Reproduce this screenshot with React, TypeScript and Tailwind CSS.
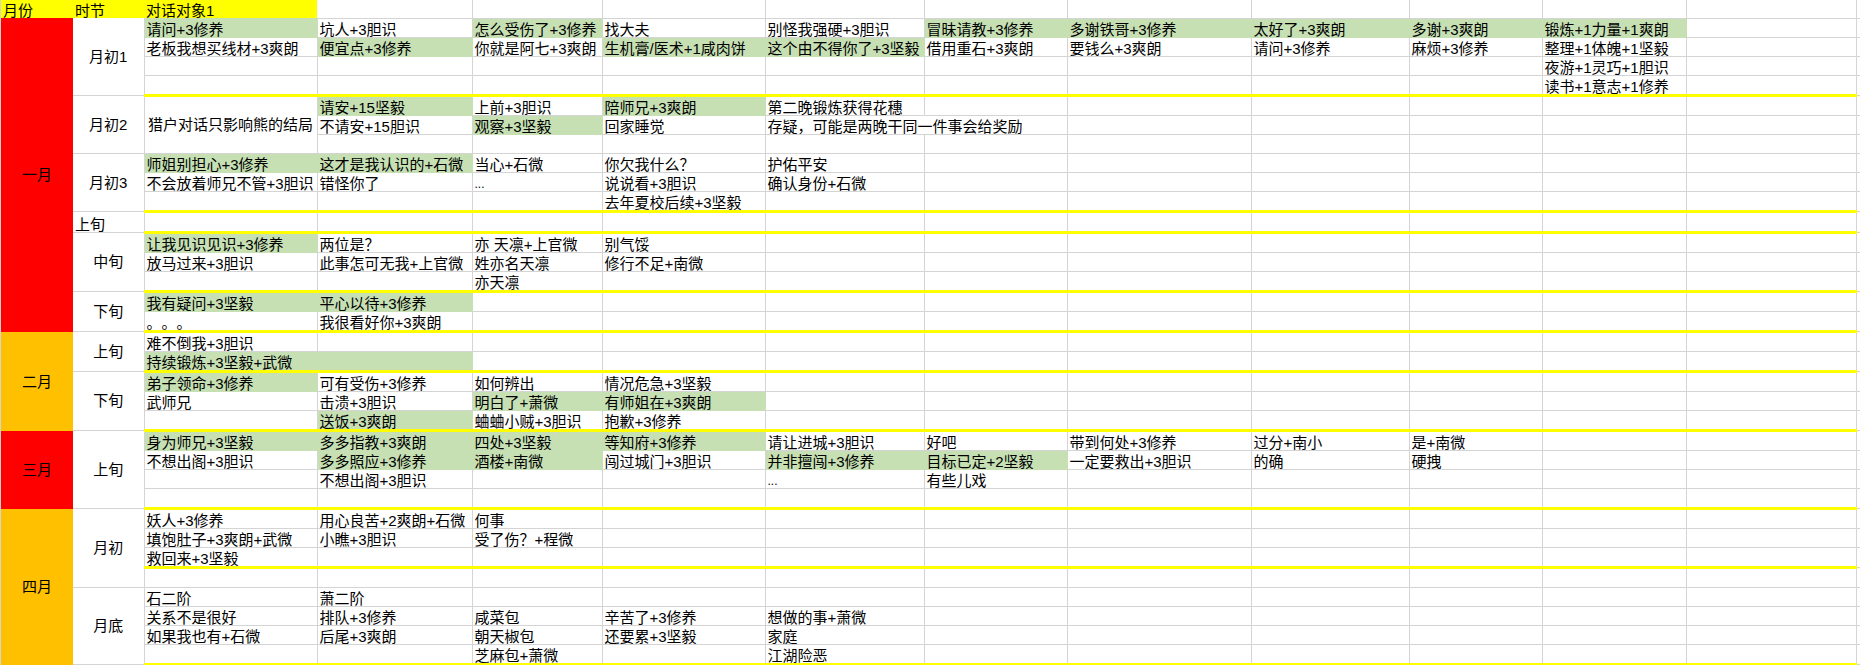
type Cell = string | { t: string; g?: boolean; span?: number; small?: boolean };

const G = (t: string, span?: number): Cell => ({ t, g: true, span });

interface Section {
  name: string;
  alignLeft?: boolean;
  rows: Cell[][];
}

interface Month {
  name: string;
  bg: string;
  sections: Section[];
}

// row heights, top to bottom, after the header
const rowHeights = [
  "h-[19px]", "h-[19px]", "h-[19px]", "h-[20px]", "h-[20px]", "h-[19px]", "h-[19px]", "h-[19px]", "h-[19px]", "h-[20px]", "h-[21px]",
  "h-[20px]", "h-[19px]", "h-[20px]", "h-[20px]", "h-[20px]", "h-[20px]", "h-[20px]", "h-[20px]", "h-[19px]", "h-[20px]", "h-[20px]",
  "h-[19px]", "h-[19px]", "h-[20px]", "h-[20px]", "h-[19px]", "h-[20px]", "h-[20px]", "h-[19px]", "h-[19px]", "h-[19px]", "h-[20px]",
];

// rows with the thick yellow line underneath
const yellowRows = [3, 9, 10, 13, 15, 17, 20, 24, 27, 32];

const columns = [
  "w-[72px]", "w-[71px]", "w-[173px]", "w-[155px]", "w-[130px]", "w-[163px]", "w-[159px]",
  "w-[143px]", "w-[184px]", "w-[158px]", "w-[133px]", "w-[144px]", "w-[170px]", "w-[4px]",
];

const months: Month[] = [
  {
    name: "一月",
    bg: "bg-[#ff0000] border-[#ff0000]",
    sections: [
      {
        name: "月初1",
        rows: [
          [G("请问+3修养"), "坑人+3胆识", G("怎么受伤了+3修养"), "找大夫", "别怪我强硬+3胆识", G("冒昧请教+3修养"), G("多谢铁哥+3修养"), G("太好了+3爽朗"), G("多谢+3爽朗"), G("锻炼+1力量+1爽朗")],
          ["老板我想买线材+3爽朗", G("便宜点+3修养"), "你就是阿七+3爽朗", G("生机膏/医术+1咸肉饼"), G("这个由不得你了+3坚毅"), "借用重石+3爽朗", "要钱么+3爽朗", "请问+3修养", "麻烦+3修养", "整理+1体魄+1坚毅"],
          ["", "", "", "", "", "", "", "", "", "夜游+1灵巧+1胆识"],
          ["", "", "", "", "", "", "", "", "", "读书+1意志+1修养"],
        ],
      },
      {
        name: "月初2",
        rows: [
          ["猎户对话只影响熊的结局", G("请安+15坚毅"), "上前+3胆识", G("陪师兄+3爽朗"), "第二晚锻炼获得花穗"],
          ["不请安+15胆识", G("观察+3坚毅"), "回家睡觉", { t: "存疑，可能是两晚干同一件事会给奖励", span: 2 }],
          [],
        ],
      },
      {
        name: "月初3",
        rows: [
          [G("师姐别担心+3修养"), G("这才是我认识的+石微"), "当心+石微", "你欠我什么？", "护佑平安"],
          ["不会放着师兄不管+3胆识", "错怪你了", { t: "...", small: true }, "说说看+3胆识", "确认身份+石微"],
          ["", "", "", "去年夏校后续+3坚毅"],
        ],
      },
      { name: "上旬", alignLeft: true, rows: [[]] },
      {
        name: "中旬",
        rows: [
          [G("让我见识见识+3修养"), "两位是？", "亦 天凛+上官微", "别气馁"],
          ["放马过来+3胆识", "此事怎可无我+上官微", "姓亦名天凛", "修行不足+南微"],
          ["", "", "亦天凛"],
        ],
      },
      {
        name: "下旬",
        rows: [
          [G("我有疑问+3坚毅"), G("平心以待+3修养")],
          ["。。。", "我很看好你+3爽朗"],
        ],
      },
    ],
  },
  {
    name: "二月",
    bg: "bg-[#ffc000] border-[#ffc000]",
    sections: [
      {
        name: "上旬",
        rows: [["难不倒我+3胆识"], [G("持续锻炼+3坚毅+武微", 2)]],
      },
      {
        name: "下旬",
        rows: [
          [G("弟子领命+3修养"), "可有受伤+3修养", "如何辨出", "情况危急+3坚毅"],
          ["武师兄", "击溃+3胆识", G("明白了+萧微"), G("有师姐在+3爽朗")],
          ["", G("送饭+3爽朗"), "蛐蛐小贼+3胆识", "抱歉+3修养"],
        ],
      },
    ],
  },
  {
    name: "三月",
    bg: "bg-[#ff0000] border-[#ff0000]",
    sections: [
      {
        name: "上旬",
        rows: [
          [G("身为师兄+3坚毅"), G("多多指教+3爽朗"), G("四处+3坚毅"), G("等知府+3修养"), "请让进城+3胆识", "好吧", "带到何处+3修养", "过分+南小", "是+南微"],
          ["不想出阁+3胆识", G("多多照应+3修养"), G("酒楼+南微"), "闯过城门+3胆识", G("并非擅闯+3修养"), G("目标已定+2坚毅"), "一定要救出+3胆识", "的确", "硬拽"],
          ["", "不想出阁+3胆识", "", "", { t: "...", small: true }, "有些儿戏"],
          [],
        ],
      },
    ],
  },
  {
    name: "四月",
    bg: "bg-[#ffc000] border-[#ffc000]",
    sections: [
      {
        name: "月初",
        rows: [
          ["妖人+3修养", "用心良苦+2爽朗+石微", "何事"],
          ["填饱肚子+3爽朗+武微", "小瞧+3胆识", "受了伤？+程微"],
          ["救回来+3坚毅"],
          [],
        ],
      },
      {
        name: "月底",
        rows: [
          ["石二阶", "萧二阶"],
          ["关系不是很好", "排队+3修养", "咸菜包", "辛苦了+3修养", "想做的事+萧微"],
          ["如果我也有+石微", "后尾+3爽朗", "朝天椒包", "还要累+3坚毅", "家庭"],
          ["", "", "芝麻包+萧微", "", "江湖险恶"],
        ],
      },
    ],
  },
];

const TOTAL_COLS = 12; // text columns, including the two blank ones on the right

const DataCells = ({ cells, yellow, mergedFirst }: { cells: Cell[]; yellow: boolean; mergedFirst: boolean }) => {
  const tds = [];
  let col = mergedFirst ? 1 : 0;
  for (const cell of cells) {
    const c = typeof cell === "string" ? { t: cell } : cell;
    const span = c.span ?? 1;
    tds.push(
      <td
        key={col}
        colSpan={span}
        className={`pl-[2px] align-bottom whitespace-nowrap border-r border-b
        ${c.g ? "bg-[#c6e0b4] border-[#c6e0b4]" : "border-[#d4d4d4]"}
        ${yellow ? "border-b-[3px] border-b-[#ffff00]" : ""}
        ${c.small ? "text-[12px]" : ""}`}
      >
        {c.t}
      </td>
    );
    col += span;
  }
  while (col < TOTAL_COLS) {
    const isLast = col === TOTAL_COLS - 1;
    tds.push(
      <td
        key={col}
        className={`border-r border-b border-[#d4d4d4] ${yellow && !isLast ? "border-b-[3px] border-b-[#ffff00]" : ""}`}
      />
    );
    col++;
  }
  return <>{tds}</>;
};

const Sheet = () => {
  let rowIndex = 0;
  const trs: React.ReactNode[] = [];

  months.forEach((month) => {
    const monthRows = month.sections.reduce((n, s) => n + s.rows.length, 0);
    month.sections.forEach((section, si) => {
      section.rows.forEach((cells, ri) => {
        const isHunter = section.name === "月初2";
        const yellow = yellowRows.includes(rowIndex);
        trs.push(
          <tr key={rowIndex} className={rowHeights[rowIndex]}>
            {si === 0 && ri === 0 && (
              <td rowSpan={monthRows} className={`${month.bg} border-b text-center align-middle pt-[2px]`}>
                {month.name}
              </td>
            )}
            {ri === 0 && (
              <td
                rowSpan={section.rows.length}
                className={`border-r border-b border-[#d4d4d4] ${section.alignLeft ? "pl-[2px] align-bottom" : "text-center align-middle pt-[1px]"}`}
              >
                {section.name}
              </td>
            )}
            {isHunter && ri === 0 && (
              <td rowSpan={3} className="text-center align-middle whitespace-nowrap border-r border-b border-[#d4d4d4]">
                猎户对话只影响熊的结局
              </td>
            )}
            <DataCells
              cells={isHunter && ri === 0 ? cells.slice(1) : cells}
              yellow={yellow}
              mergedFirst={isHunter}
            />
          </tr>
        );
        rowIndex++;
      });
    });
  });

  return (
    <table className="table-fixed border-collapse w-[1859px]">
      <colgroup>
        {columns.map((w, i) => (
          <col key={i} className={w} />
        ))}
      </colgroup>
      <tbody>
        <tr className="h-[18px]">
          <td className="bg-[#ffff00] pl-[2px] align-bottom">月份</td>
          <td className="bg-[#ffff00] pl-[2px] align-bottom">时节</td>
          <td className="bg-[#ffff00] pl-[2px] align-bottom">对话对象1</td>
          {Array.from({ length: 11 }).map((_, i) => (
            <td key={i} className="border-r border-b border-[#d4d4d4]" />
          ))}
        </tr>
        {trs}
        <tr className="h-[19px]">
          <td className="bg-[#ff0000]" />
          <td colSpan={13} />
        </tr>
      </tbody>
    </table>
  );
};

export default function App() {
  return (
    <div className="h-[665px] w-[1860px] overflow-hidden bg-white border-l border-[#d4d4d4] text-[15px] leading-[14px] text-black [text-spacing-trim:space-all] font-['Liberation_Sans','Noto_Sans_CJK_SC',sans-serif]">
      <Sheet />
    </div>
  );
}
